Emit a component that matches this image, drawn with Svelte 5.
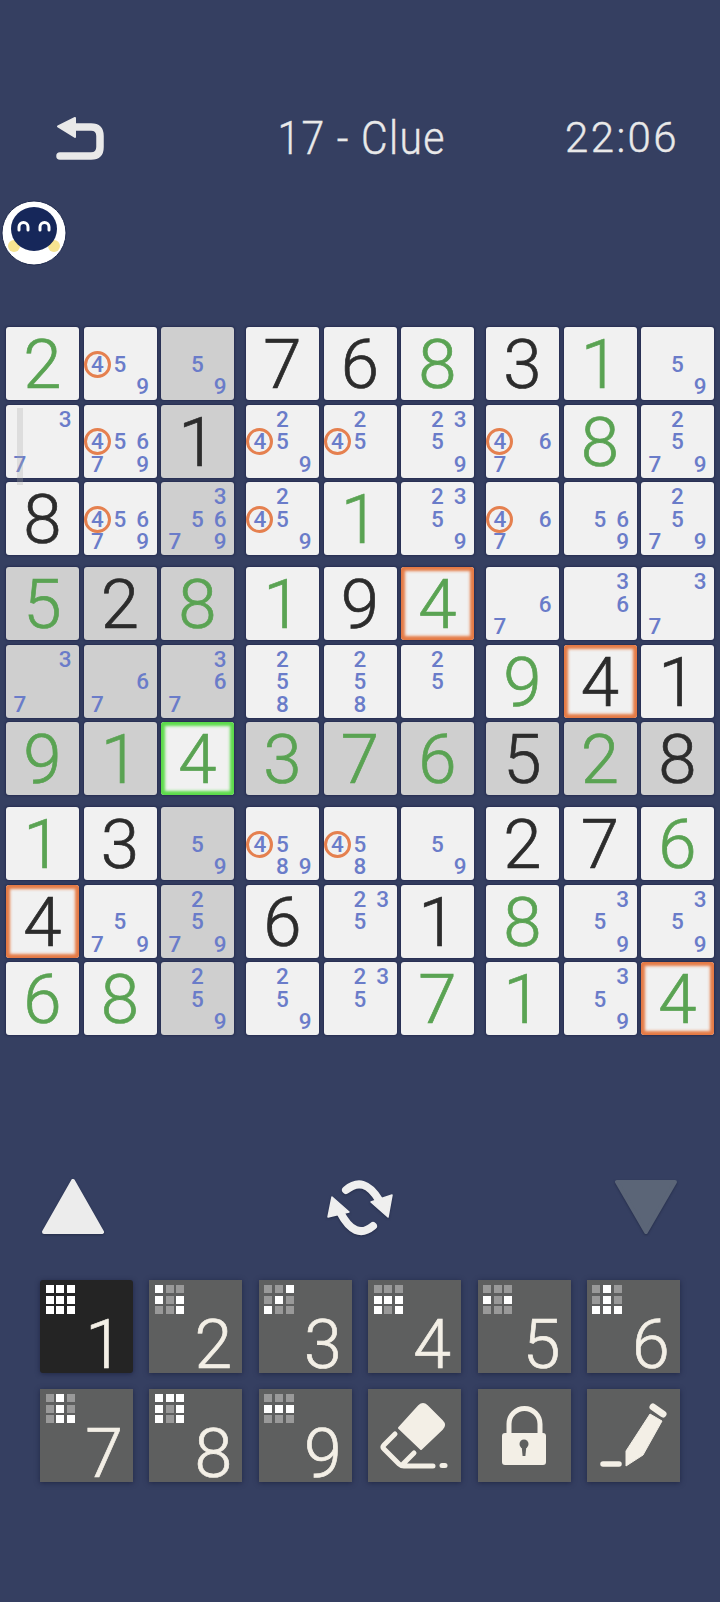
<script>
  const raw = [
    ['g2','459','59','k7','k6','g8','k3','g1','59'],
    ['37','45679','k1','2459','245','2359','467','g8','2579'],
    ['k8','45679','35679','2459','g1','2359','467','569','2579'],
    ['g5','k2','g8','g1','k9','g4','67','36','37'],
    ['37','67','367','258','258','25','g9','k4','k1'],
    ['g9','g1','g4','g3','g7','g6','k5','g2','k8'],
    ['g1','k3','59','4589','458','59','k2','k7','g6'],
    ['k4','579','2579','k6','235','k1','g8','359','359'],
    ['g6','g8','259','259','235','g7','g1','359','g4']
  ];
  const sel = { r: 5, c: 2 };

  function cellAt(r, c) {
    const v = raw[r][c];
    const given = v[0] === 'g' || v[0] === 'k';
    const shaded = r === sel.r || c === sel.c ||
      (Math.floor(r / 3) === Math.floor(sel.r / 3) && Math.floor(c / 3) === Math.floor(sel.c / 3));
    const selected = r === sel.r && c === sel.c;
    return {
      key: `${r}-${c}`,
      given,
      tone: given ? (v[0] === 'g' ? 'green' : 'black') : '',
      value: given ? v[1] : '',
      marks: given ? [] : v.split(''),
      shaded: shaded && !selected,
      selected,
      clash: given && v[1] === '4' && !selected
    };
  }

  const boxes = [0, 1, 2].flatMap((br) =>
    [0, 1, 2].map((bc) => {
      const cells = [];
      for (let r = br * 3; r < br * 3 + 3; r++)
        for (let c = bc * 3; c < bc * 3 + 3; c++) cells.push(cellAt(r, c));
      return cells;
    })
  );

  const nine = ['1','2','3','4','5','6','7','8','9'];
  const pads = [
    { n: '1', on: '111111111', active: true },
    { n: '2', on: '100101001' },
    { n: '3', on: '001010100' },
    { n: '4', on: '000111101' },
    { n: '5', on: '000101000' },
    { n: '6', on: '010010111' },
    { n: '7', on: '010010011' },
    { n: '8', on: '111101101' },
    { n: '9', on: '000111000' }
  ];
</script>

<div class="page">
  <header class="top">
    <button class="back" aria-label="Back">
      <svg viewBox="0 0 48 44" width="48" height="44">
        <path d="M19 11 H35 Q44 11 44 20 V31 Q44 40 35 40 H4" fill="none" stroke="#e9e9e9" stroke-width="7.5" stroke-linecap="round"/>
        <path d="M19 2 V21 L2 10.5 Z" fill="#e9e9e9" stroke="#e9e9e9" stroke-width="2" stroke-linejoin="round"/>
      </svg>
    </button>
    <h1 class="title">17 - Clue</h1>
    <div class="time">22:06</div>
  </header>

  <div class="mascot">
    <svg viewBox="0 0 66 66" width="66" height="66">
      <defs><clipPath id="oval"><circle cx="33" cy="33" r="32"/></clipPath></defs>
      <circle cx="33" cy="33" r="32" fill="#fff" stroke="#1f2a4d" stroke-width="1"/>
      <g clip-path="url(#oval)">
        <ellipse cx="13" cy="46" rx="6" ry="6" fill="#f7e490"/>
        <ellipse cx="53" cy="46" rx="6" ry="6" fill="#f7e490"/>
      </g>
      <ellipse cx="33" cy="29" rx="23" ry="22" fill="#16275a"/>
      <path d="M18 30 V27 A4.5 4.5 0 0 1 27 27 V30 M39 30 V27 A4.5 4.5 0 0 1 48 27 V30" fill="none" stroke="#fff" stroke-width="3" stroke-linecap="round"/>
    </svg>
  </div>

  <div class="board">
    <span class="scrollbar"></span>
    {#each boxes as box}
      <div class="box">
        {#each box as cell (cell.key)}
          <div class="cell" class:shaded={cell.shaded} class:selected={cell.selected} class:clash={cell.clash}>
            {#if cell.given}
              <span class="value {cell.tone}">{cell.value}</span>
            {:else}
              <div class="marks">
                {#each nine as d}
                  <span class="mark" class:ring={d === '4' && cell.marks.includes('4')}>{cell.marks.includes(d) ? d : ''}</span>
                {/each}
              </div>
            {/if}
          </div>
        {/each}
      </div>
    {/each}
  </div>

  <div class="controls">
    <svg class="tri" viewBox="0 0 64 58" width="64" height="58" aria-label="Up">
      <path d="M32 3 L61 54 H3 Z" fill="#ececec" stroke="#ececec" stroke-width="4" stroke-linejoin="round"/>
    </svg>
    <svg viewBox="326 1178 68 58" width="68" height="58" aria-label="Swap">
      <g fill="none" stroke="#efefef" stroke-width="8" stroke-linecap="round">
        <path d="M346 1190 Q 364 1175 379 1200"/>
        <path d="M373 1226 Q 355 1241 340 1212"/>
      </g>
      <g fill="#efefef" stroke="#efefef" stroke-width="1.5" stroke-linejoin="round">
        <path d="M371 1202 L392 1195 L388 1217 Z"/>
        <path d="M332 1197 L328 1217 L349 1212 Z"/>
      </g>
    </svg>
    <svg class="tri" viewBox="0 0 64 58" width="64" height="58" aria-label="Down">
      <path d="M3 4 H61 L32 54 Z" fill="#5b6577" stroke="#5b6577" stroke-width="4" stroke-linejoin="round"/>
    </svg>
  </div>

  <div class="pad">
    {#each pads as p}
      <button class="key" class:active={p.active}>
        <span class="mini">
          {#each p.on.split('') as o}
            <i class:lit={o === '1'}></i>
          {/each}
        </span>
        <span class="keynum">{p.n}</span>
      </button>
    {/each}

    <button class="key" aria-label="Erase">
      <svg viewBox="0 0 93 93" width="93" height="93">
        <path d="M51 17 Q55 13 59 17 L74 32 Q78 36 74 40 L53 60 L31 39 Z" fill="#f3efe6" stroke="#f3efe6" stroke-width="2" stroke-linejoin="round"/>
        <path d="M27 45 L16 56 Q14 58 16 60 L31 75 Q33 77 36 77 H65 M46 64 L35 75" fill="none" stroke="#f3efe6" stroke-width="5" stroke-linecap="round" stroke-linejoin="round"/>
        <path d="M74 76.5 H77" fill="none" stroke="#f3efe6" stroke-width="5" stroke-linecap="round"/>
      </svg>
    </button>
    <button class="key" aria-label="Lock">
      <svg viewBox="0 0 93 93" width="93" height="93">
        <path d="M31 44 V35 A15.5 15.5 0 0 1 62 35 V44" fill="none" stroke="#f3efe6" stroke-width="5"/>
        <rect x="24" y="44" width="44" height="32" rx="3" fill="#f3efe6"/>
        <circle cx="46" cy="55" r="4.5" fill="#5e5f5f"/>
        <path d="M43.5 56 H48.5 L47.4 67 H44.6 Z" fill="#5e5f5f"/>
      </svg>
    </button>
    <button class="key" aria-label="Pencil">
      <svg viewBox="0 0 93 93" width="93" height="93">
        <path d="M39 77 V62 L63 25 L75 32 L56 66 Z" fill="#f3efe6" stroke="#f3efe6" stroke-width="1" stroke-linejoin="round"/>
        <path d="M66 18 L76 25" fill="none" stroke="#f3efe6" stroke-width="7" stroke-linecap="round"/>
        <path d="M16 75 H32" fill="none" stroke="#f3efe6" stroke-width="5.5" stroke-linecap="round"/>
      </svg>
    </button>
  </div>
</div>

<style>
  :global(body) { margin: 0; background: #353f61; }
  .page {
    width: 720px;
    height: 1602px;
    background: #353f61;
    overflow: hidden;
    font-family: Roboto, "Liberation Sans", sans-serif;
    color: #e9e9e9;
  }
  .top {
    display: grid;
    grid-template-columns: 1fr auto 1fr;
    align-items: center;
    height: 50px;
    padding: 113px 41px 0 56px;
  }
  .back { all: unset; display: block; width: 48px; height: 44px; }
  .back svg { display: block; }
  .title {
    margin: 0;
    font-size: 47px;
    font-weight: 300;
    letter-spacing: 1.5px;
    line-height: 50px;
    -webkit-text-stroke: 0.4px #e9e9e9;
    transform: translateX(-6px) scaleX(0.87);
  }
  .time {
    justify-self: end;
    font-size: 42px;
    font-weight: 300;
    letter-spacing: 2.4px;
    line-height: 50px;
    -webkit-text-stroke: 0.4px #e9e9e9;
  }
  .mascot { margin: 37px 0 0 0.5px; height: 66px; }
  .mascot svg { display: block; }

  .board {
    position: relative;
    display: grid;
    grid-template-columns: repeat(3, 228px);
    gap: 12px;
    margin: 61px 0 0 6px;
  }
  .scrollbar {
    position: absolute;
    left: 11px;
    top: 81px;
    width: 6px;
    height: 77px;
    background: rgba(170, 170, 170, 0.28);
    z-index: 2;
  }
  .box {
    display: grid;
    grid-template-columns: repeat(3, 73px);
    grid-auto-rows: 73px;
    gap: 4.5px;
  }
  .cell {
    position: relative;
    display: flex;
    align-items: center;
    justify-content: center;
    background: #f1f1f1;
    border-radius: 3px;
    box-shadow: 0 0 2px 1px #262e52;
  }
  .cell.shaded { background: #cfcfcf; }
  .cell.clash { box-shadow: 0 0 2px 1px #262e52, inset 0 0 3px 4px #e57a45; }
  .cell.selected { box-shadow: 0 0 2px 1px #262e52, inset 0 0 3px 4px #5cdb4a; }
  .value {
    font-size: 69px;
    font-weight: 300;
    line-height: 73px;
    margin-top: 2px;
  }
  .green { color: #5aa353; -webkit-text-stroke: 0.7px #5aa353; }
  .black { color: #2c2c2c; -webkit-text-stroke: 0.7px #2c2c2c; }
  .marks {
    display: grid;
    grid-template-columns: repeat(3, 22.7px);
    grid-auto-rows: 22.7px;
    margin-top: 1px;
  }
  .mark {
    display: flex;
    align-items: center;
    justify-content: center;
    font-size: 22.5px;
    font-weight: 500;
    color: #6a7cc9;
    line-height: 1;
  }
  .mark.ring {
    box-sizing: border-box;
    width: 27px;
    height: 27px;
    margin: -2.15px;
    border: 3px solid #e5804f;
    border-radius: 50%;
  }

  .controls {
    display: flex;
    align-items: center;
    justify-content: space-between;
    height: 58px;
    margin: 143px 0 0;
    padding: 0 42px 0 41px;
  }
  .controls svg { display: block; filter: drop-shadow(0 1px 1px rgba(20, 26, 50, 0.5)); }

  .pad {
    display: grid;
    grid-template-columns: repeat(6, 93px);
    grid-auto-rows: 93px;
    column-gap: 16.4px;
    row-gap: 16px;
    margin: 44px 0 0 40px;
  }
  .key {
    all: unset;
    position: relative;
    display: block;
    width: 93px;
    height: 93px;
    background: #5e5f5f;
    box-shadow: 0 1px 5px rgba(24, 30, 58, 0.7);
  }
  .key.active { background: #242424; border-radius: 3px; }
  .key svg { display: block; }
  .mini {
    position: absolute;
    left: 5.5px;
    top: 5px;
    display: grid;
    grid-template-columns: repeat(3, 8px);
    grid-auto-rows: 8px;
    gap: 2.7px;
  }
  .mini i { display: block; background: #999; }
  .mini i.lit { background: #fff; }
  .keynum {
    position: absolute;
    left: 44px;
    bottom: 3px;
    width: 40px;
    text-align: center;
    font-size: 68px;
    font-weight: 300;
    line-height: 50px;
    color: #f3efe6;
    -webkit-text-stroke: 0.7px #f3efe6;
  }
</style>
